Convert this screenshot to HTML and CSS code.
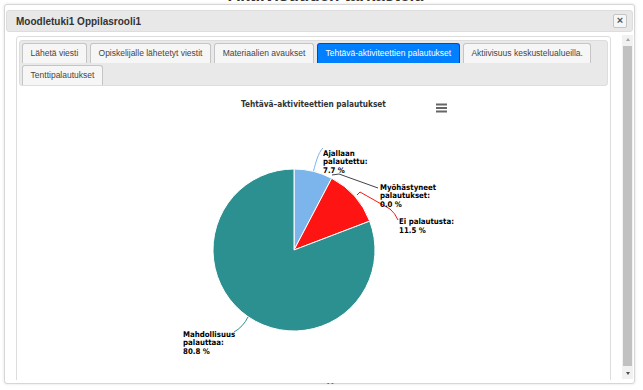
FILE: index.html
```html
<!DOCTYPE html>
<html lang="fi">
<head>
<meta charset="utf-8">
<title>Moodletuki1 Oppilasrooli1</title>
<link rel="stylesheet" href="styles.css">
</head>
<body>
<div class="bg-heading">Aktiivisuuden tarkastelu</div>
<div class="dialog">
  <div class="titlebar">
    <span class="title">Moodletuki1 Oppilasrooli1</span>
    <span class="close">×</span>
  </div>
  <div class="content">
    <div class="panel">
      <ul class="tabs">
        <li class="tab">Lähetä viesti</li>
        <li class="tab">Opiskelijalle lähetetyt viestit</li>
        <li class="tab">Materiaalien avaukset</li>
        <li class="tab active">Tehtävä-aktiviteettien palautukset</li>
        <li class="tab">Aktiivisuus keskustelualueilla.</li>
        <li class="tab">Tenttipalautukset</li>
      </ul>
      <svg class="chart" width="589" height="294" viewBox="19 85 589 294" xmlns="http://www.w3.org/2000/svg">
        <text class="chart-title" x="313.5" y="106" text-anchor="middle">Tehtävä–aktiviteettien palautukset</text>
        <g class="menu">
          <rect x="436" y="102.5" width="11" height="2"/>
          <rect x="436" y="106" width="11" height="2"/>
          <rect x="436" y="109.5" width="11" height="2"/>
        </g>
        <g class="slices">
          <path fill="#7cb5ec" d="M294 249 L294 168 A81 81 0 0 1 331.67 177.29 Z"/>
          <path fill="#ff1414" d="M294 249 L331.67 177.29 A81 81 0 0 1 369.68 220.13 Z"/>
          <path fill="#2b908f" d="M294 249 L369.68 220.13 A81 81 0 1 1 294 168 Z"/>
        </g>
        <g class="connectors" fill="none" stroke-width="1">
          <path stroke="#7cb5ec" d="M313.5 170 C316 161 318 152 323 147"/>
          <path stroke="#434348" d="M332 174 L339 173 L378 187"/>
          <path stroke="#ff1414" d="M357 194 L360 191 L390 208 Q395 212 398 219"/>
          <path stroke="#2b908f" d="M248 316 Q243 326 234 331"/>
        </g>
        <g class="labels">
          <text x="323" y="154.5">Ajallaan</text>
          <text x="323" y="163">palautettu:</text>
          <text x="323" y="171.5">7.7 %</text>
          <text x="380" y="188.5">Myöhästyneet</text>
          <text x="380" y="197">palautukset:</text>
          <text x="380" y="205.5">0.0 %</text>
          <text x="399" y="223">Ei palautusta:</text>
          <text x="399" y="231.5">11.5 %</text>
          <text x="183" y="335.5">Mahdollisuus</text>
          <text x="183" y="344">palauttaa:</text>
          <text x="183" y="352.5">80.8 %</text>
        </g>
      </svg>
    </div>
    <div class="scrollbar">
      <div class="arrow up"></div>
      <div class="thumb"></div>
      <div class="arrow down"></div>
    </div>
  </div>
  <div class="resize">ˆ ˆ</div>
</div>
</body>
</html>
```
FILE: styles.css
```css
html, body {
  margin: 0;
  padding: 0;
}
body {
  width: 643px;
  height: 390px;
  overflow: hidden;
  position: relative;
  background: #ffffff;
  font-family: "Liberation Sans", Arial, sans-serif;
}
.bg-heading {
  position: absolute;
  top: -14px;
  left: 228px;
  font-size: 17px;
  font-weight: bold;
  color: #333;
  white-space: nowrap;
}
.dialog {
  position: absolute;
  left: 4px;
  top: 4px;
  width: 631px;
  height: 380px;
  box-sizing: border-box;
  border: 1px solid #d6d6d6;
  border-radius: 3px;
  box-shadow: 0 0 3px rgba(0, 0, 0, 0.12);
  background: #fff;
  padding: 5px 1px 3px 1px;
  display: flex;
  flex-direction: column;
}
.titlebar {
  height: 22px;
  box-sizing: border-box;
  background: #e8e8e8;
  border: 1px solid #dddddd;
  border-radius: 3px;
  display: flex;
  align-items: center;
  justify-content: space-between;
  padding: 0 4px 0 9px;
}
.title {
  font-size: 10px;
  font-weight: bold;
  color: #333;
}
.close {
  width: 14px;
  height: 14px;
  box-sizing: border-box;
  border: 1px solid #c5c5c5;
  border-radius: 2px;
  background: #f6f6f6;
  color: #555;
  font-size: 11px;
  font-weight: bold;
  line-height: 11px;
  text-align: center;
  margin-right: 1px;
}
.content {
  flex: 1;
  display: flex;
  overflow: hidden;
  padding: 3px 0 0 10px;
}
.panel {
  width: 595px;
  height: 360px;
  margin-top: 1px;
  box-sizing: border-box;
  border: 1px solid #dddddd;
  border-radius: 3px;
  padding: 3px 2px 0 2px;
  flex-shrink: 0;
}
.tabs {
  list-style: none;
  margin: 0;
  padding: 2px 2px 0 2px;
  background: #e9e9e9;
  border: 1px solid #dddddd;
  border-radius: 3px;
  display: flex;
  flex-wrap: wrap;
  column-gap: 3px;
  row-gap: 2px;
}
.tab {
  height: 19px;
  line-height: 19px;
  border: 1px solid #c5c5c5;
  border-bottom: 0;
  border-radius: 3px 3px 0 0;
  background: #f6f6f6;
  color: #454545;
  font-size: 8.5px;
  padding: 0 7.6px;
  white-space: nowrap;
}
.tab.active {
  background: #007fff;
  border-color: #003eff;
  color: #ffffff;
}
.chart {
  display: block;
}
.chart-title {
  font-family: "DejaVu Sans Condensed", "DejaVu Sans", sans-serif;
  font-stretch: condensed;
  font-weight: bold;
  font-size: 8.2px;
  fill: #333333;
}
.menu rect {
  fill: #666666;
}
.slices path {
  stroke: #ffffff;
  stroke-width: 1;
}
.labels text {
  font-family: "DejaVu Sans Condensed", "DejaVu Sans", sans-serif;
  font-stretch: condensed;
  font-weight: bold;
  font-size: 7.8px;
  fill: #000000;
}
.scrollbar {
  width: 11px;
  height: 344px;
  margin-left: 11px;
  margin-top: 0;
  background: #f1f1f1;
  display: flex;
  flex-direction: column;
  align-items: center;
  flex-shrink: 0;
}
.arrow {
  width: 0;
  height: 0;
  border-left: 2.5px solid transparent;
  border-right: 2.5px solid transparent;
}
.arrow.up {
  border-bottom: 3px solid #a3a3a3;
  margin: 3px 0 2px;
}
.arrow.down {
  border-top: 3px solid #505050;
  margin: 6px 0 0;
}
.thumb {
  width: 9px;
  height: 320px;
  background: #c1c1c1;
  margin-top: 3px;
}
.resize {
  position: absolute;
  left: 322px;
  bottom: -6px;
  font-size: 7px;
  color: #333;
}
```
